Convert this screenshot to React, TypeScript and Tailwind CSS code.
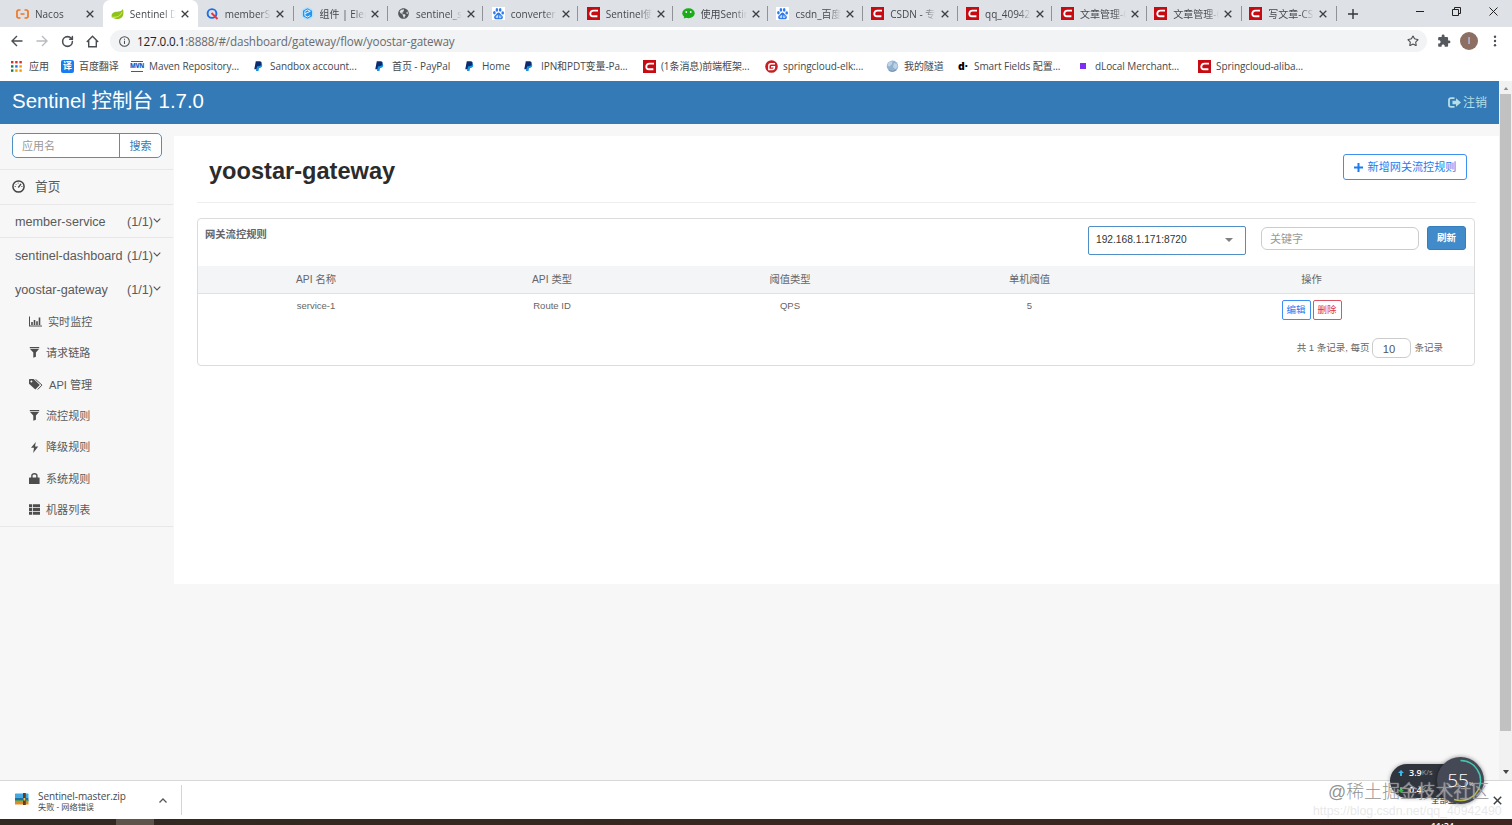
import type { ReactNode } from "react";
import { RotateCw, Star } from "lucide-react";
import { FaGlobeAmericas } from "react-icons/fa";
import { MdExtension } from "react-icons/md";

const ui = "font-['Open_Sans','Noto_Sans_CJK_SC',sans-serif]";
const web = "font-['Liberation_Sans','Noto_Sans_CJK_SC',sans-serif]";

function Csdn() {
  return (
    <svg viewBox="0 0 13 13" className="h-[13px] w-[13px]">
      <rect width="13" height="13" fill="#c70b12" />
      <path d="M11 3.600H6.400Q3.500 3.600 3.300 6.500Q3.200 9.300 5.800 9.300H10.400" fill="none" stroke="#fff" strokeWidth="1.900" />
    </svg>
  );
}

function Paypal() {
  return (
    <svg viewBox="0 0 10 11" className="h-[10px] w-[9px]">
      <path d="M3.200 2.800h4.300c1.500.3 2 1.400 1.500 2.800C8.500 7.300 7.200 7.800 5.600 7.800L5 11H2.200z" fill="#1b93dc" />
      <path d="M2 .3h4.200c1.900.1 2.600 1.200 2.200 2.800C8 5.100 6.600 5.800 4.600 5.800H3.500L2.800 9H.3z" fill="#0c2c71" />
    </svg>
  );
}

function Baidu() {
  return (
    <svg viewBox="0 0 13 13" className="h-[13px] w-[13px]">
      <rect width="13" height="13" fill="#fff" />
      <g fill="#2f7bea">
        <ellipse cx="2.400" cy="5.700" rx="1.300" ry="1.700" />
        <ellipse cx="4.900" cy="2.900" rx="1.300" ry="1.800" />
        <ellipse cx="8.200" cy="2.900" rx="1.300" ry="1.800" />
        <ellipse cx="10.700" cy="5.900" rx="1.300" ry="1.700" />
        <path d="M6.500 5.600c1.300 0 1.700 1.200 2.700 2.200 1.300 1.200 2 1.900 1.600 3.300-.4 1.500-2.200 1.200-4.300 1.100-2.100.1-3.900.4-4.300-1.100-.4-1.400.3-2.100 1.600-3.300 1-1 1.400-2.200 2.700-2.200z" />
      </g>
      <path d="M5.600 8v2.600H4.300V9.200h1.300M7.400 8.500v2.100h1.500V8.500" fill="none" stroke="#fff" strokeWidth=".7" />
    </svg>
  );
}

function Cross({ className = "h-2 w-2" }: { className?: string }) {
  return (
    <svg viewBox="0 0 8 8" className={className} fill="none" stroke="#3c4043" strokeWidth="1.300">
      <path d="M.7.7l6.600 6.600M7.300.7L.7 7.300" />
    </svg>
  );
}

const favicons: Record<string, ReactNode> = {
  nacos: (
    <svg viewBox="0 0 13 10" className="h-[10px] w-[13px]" fill="none" stroke="#f07623" strokeWidth="1.700">
      <path d="M4.500 1H2.200L1 2.200v5.600L2.200 9h2.300M8.500 1h2.300L12 2.200v5.600L10.800 9H8.500M4.500 5h4" />
    </svg>
  ),
  leaf: (
    <svg viewBox="0 0 14 12" className="h-3 w-[14px]">
      <path d="M.8 9.500C-.3 4.200 4 3.600 8 3.200 10.500 3 12 2 12.800.5c1.500 5 .3 10.500-5 10.800-2 .2-4.500 0-7-1.800z" fill="#8dc21f" />
      <path d="M1 9.500c4 .5 9-1 11-5.500" fill="none" stroke="#d5e94a" strokeWidth="1.200" />
    </svg>
  ),
  quick: (
    <svg viewBox="0 0 13 12" className="h-3 w-[13px]" fill="none">
      <circle cx="6" cy="5.500" r="4.400" stroke="#1b6fe8" strokeWidth="1.900" />
      <path d="M5.500 5l6 6" stroke="#e9383f" strokeWidth="2" />
    </svg>
  ),
  element: (
    <svg viewBox="0 0 13 13" className="h-[13px] w-[13px]">
      <circle cx="6.500" cy="6.500" r="6.300" fill="#b5e1fb" />
      <path d="M6.500 1.200l4.500 2.600v5.400l-4.500 2.600L2 9.200V3.800z" fill="#2494ef" />
      <path d="M9.300 4.300L6.500 2.900 3.900 4.400v4.200l2.600 1.400 2.800-1.500M4 6.700l5.300-2.400" stroke="#e8f6ff" fill="none" />
    </svg>
  ),
  globe: <FaGlobeAmericas className="h-[11px] w-[11px] text-[#55585c]" />,
  baidu: <Baidu />,
  csdn: <Csdn />,
  wechat: (
    <svg viewBox="0 0 13 11" className="h-[11px] w-[13px]">
      <ellipse cx="6.500" cy="5.300" rx="6.200" ry="5" fill="#1aad19" />
      <path d="M2.500 8l-.8 2.600L5 9.500z" fill="#1aad19" />
      <circle cx="4.300" cy="4" r=".9" fill="#fff" />
      <circle cx="8.700" cy="4" r=".9" fill="#fff" />
    </svg>
  ),
};

const tabs = [
  { icon: "nacos", title: "Nacos" },
  { icon: "leaf", title: "Sentinel Dashboard", active: true },
  { icon: "quick", title: "memberService" },
  { icon: "element", title: "组件 | Element", line: true },
  { icon: "globe", title: "sentinel_server", line: true },
  { icon: "baidu", title: "converter_百", line: true },
  { icon: "csdn", title: "Sentinel使用", line: true },
  { icon: "wechat", title: "使用Sentinel", line: true },
  { icon: "baidu", title: "csdn_百度搜", line: true },
  { icon: "csdn", title: "CSDN - 专业", line: true },
  { icon: "csdn", title: "qq_40942490", line: true },
  { icon: "csdn", title: "文章管理-CS", line: true },
  { icon: "csdn", title: "文章管理-CS", line: true },
  { icon: "csdn", title: "写文章-CSDN", line: true },
];

function TabStrip() {
  return (
    <div className="flex h-[27px] bg-[#dee1e6] pl-2">
      {tabs.map((tab, i) => (
        <div
          key={i}
          className={`relative flex h-[27px] w-[94.860px] shrink-0 items-center ${tab.active ? "rounded-t-[7px] bg-white" : ""} ${i > 3 && i < 12 ? "pl-[9.500px]" : "pl-2"}`}
        >
          {tab.line && <span className="absolute top-[6px] left-0 h-[15px] w-px bg-[#8f9297]" />}
          <span className="flex w-[13px] justify-center">{favicons[tab.icon]}</span>
          <span className="ml-1.5 w-[46px] overflow-hidden text-[10px] leading-4 whitespace-nowrap text-[#45494d] [mask-image:linear-gradient(to_right,black_72%,transparent)]">
            {tab.title}
          </span>
          <span className="ml-[5px]">
            <Cross />
          </span>
        </div>
      ))}
      <div className="relative flex w-[50px] items-center pl-3">
        <span className="absolute top-[6px] left-0 h-[15px] w-px bg-[#8f9297]" />
        <svg viewBox="0 0 10 10" className="h-[10px] w-[10px]" stroke="#33363a" strokeWidth="1.400">
          <path d="M5 0v10M0 5h10" />
        </svg>
      </div>
      <div className="ml-auto flex h-[23px] items-center gap-[28px] pr-[14px]">
        <svg viewBox="0 0 8 8" className="h-2 w-2" stroke="#222">
          <path d="M0 3.500h8" />
        </svg>
        <svg viewBox="0 0 9 9" className="h-[9px] w-[9px]" fill="none" stroke="#222">
          <path d="M.5 2.500h6v6h-6zM2.500 2.500v-2h6v6h-2" />
        </svg>
        <svg viewBox="0 0 9 9" className="h-[9px] w-[9px]" stroke="#222">
          <path d="M.5.5l8 8M8.500.5l-8 8" />
        </svg>
      </div>
    </div>
  );
}

function Toolbar() {
  return (
    <div className="flex h-7 items-center bg-white pr-[14px] pl-[11px]">
      <svg viewBox="0 0 12 12" className="h-3 w-3" fill="none" stroke="#4a4d51" strokeWidth="1.400">
        <path d="M11.500 6H1.200M6 1L1 6l5 5" />
      </svg>
      <svg viewBox="0 0 12 12" className="ml-[13px] h-3 w-3" fill="none" stroke="#b9bbbe" strokeWidth="1.400">
        <path d="M.5 6h10.300M6 1l5 5-5 5" />
      </svg>
      <RotateCw className="ml-[13px] h-[13px] w-[13px] text-[#4a4d51]" strokeWidth={2.800} />
      <svg viewBox="0 0 13 13" className="ml-3 h-[13px] w-[13px]" fill="none" stroke="#4a4d51" strokeWidth="1.400">
        <path d="M.8 7L6.500 1.300 12.200 7M2.700 5.500v6.300h7.600V5.500" />
      </svg>
      <div className="ml-[11px] flex h-[22px] w-[1317px] items-center rounded-full bg-[#f1f3f4] pr-2 pl-[9px]">
        <svg viewBox="0 0 12 12" className="h-[11px] w-[11px]" fill="none" stroke="#4a4d51" strokeWidth="1.100">
          <circle cx="6" cy="6" r="5.300" />
          <path d="M6 5.200v3.500M6 3v1.200" />
        </svg>
        <span className="mb-px ml-[7px] text-[11.700px] leading-5 tracking-[-0.130px] whitespace-nowrap text-[#686c71]">
          <span className="text-[#202124]">127.0.0.1</span>:8888/#/dashboard/gateway/flow/yoostar-gateway
        </span>
        <Star className="ml-auto h-3 w-3 text-[#4a4d51]" strokeWidth={2.200} />
      </div>
      <MdExtension className="ml-[10px] h-[14px] w-[14px] text-[#55585c]" />
      <span className="ml-[9px] flex h-[18px] w-[18px] items-center justify-center rounded-full bg-[#8d6e63] text-[9px] text-[#f3ebe8]">
        I
      </span>
      <svg viewBox="0 0 4 12" className="ml-[15px] h-3 w-1" fill="#4a4d51">
        <circle cx="2" cy="1.800" r="1.200" />
        <circle cx="2" cy="6" r="1.200" />
        <circle cx="2" cy="10.200" r="1.200" />
      </svg>
    </div>
  );
}

const apps = ["#d93025", "#d93025", "#d93025", "#188038", "#1a73e8", "#f29900", "#188038", "#f29900", "#f29900"];

type Bookmark = { icon: ReactNode; text: string; width: string; gap?: string };

const bookmarks: Bookmark[] = [
  {
    icon: (
      <svg viewBox="0 0 11 11" className="h-[11px] w-[11px]">
        {apps.map((color, i) => (
          <rect key={i} x={(i % 3) * 4.200} y={Math.floor(i / 3) * 4.200} width="2.400" height="2.400" fill={color} />
        ))}
      </svg>
    ),
    text: "应用",
    width: "w-[50px]",
    gap: "w-[18px]",
  },
  {
    icon: (
      <span className="flex h-[13px] w-[13px] items-center justify-center rounded-[2px] bg-[#1a7cf0] text-[9px] leading-3 font-bold text-white">
        译
      </span>
    ),
    text: "百度翻译",
    width: "w-[70px]",
    gap: "w-[18px]",
  },
  {
    icon: (
      <span className="flex h-[11px] w-3 items-center justify-center border-y border-[#1565c8] text-[6px] leading-none font-extrabold tracking-[-0.400px] text-[#1565c8]">
        MVN
      </span>
    ),
    text: "Maven Repository...",
    width: "w-[123px]",
    gap: "w-[18px]",
  },
  { icon: <Paypal />, text: "Sandbox account...", width: "w-[121px]", gap: "w-4" },
  { icon: <Paypal />, text: "首页 - PayPal", width: "w-[90px]", gap: "w-[17px]" },
  { icon: <Paypal />, text: "Home", width: "w-[59px]", gap: "w-[17px]" },
  { icon: <Paypal />, text: "IPN和PDT变量-Pa...", width: "w-[119px]", gap: "w-[17px]" },
  { icon: <Csdn />, text: "(1条消息)前端框架...", width: "w-[122px]", gap: "w-[18px]" },
  {
    icon: (
      <svg viewBox="0 0 13 13" className="h-[13px] w-[13px]">
        <circle cx="6.500" cy="6.500" r="6.300" fill="#c71d23" />
        <path d="M10 3.800H6Q3.800 3.800 3.800 6v3.500h3.700Q9.500 9.300 9.500 6.700H6" fill="none" stroke="#fff" strokeWidth="1.400" />
      </svg>
    ),
    text: "springcloud-elk:...",
    width: "w-[121px]",
    gap: "w-[18px]",
  },
  {
    icon: (
      <svg viewBox="0 0 13 13" className="h-[13px] w-[13px]">
        <circle cx="6.500" cy="6.300" r="5.700" fill="#8fb1d2" />
        <path d="M2 3.500Q4 .8 6.500 1.500L6 4 3.500 6.500 1.500 6zM8 3l3 .7.800 3-2.500 2.500L7 7z" fill="#bdd3e2" />
        <path d="M3 10.500q3.500 2 7-.5" stroke="#7d91a8" fill="none" />
      </svg>
    ),
    text: "我的隧道",
    width: "w-[72px]",
    gap: "w-[18px]",
  },
  {
    icon: <span className="text-[10.500px] leading-3 font-extrabold text-black">d·</span>,
    text: "Smart Fields 配置...",
    width: "w-[121px]",
    gap: "w-[16px]",
  },
  { icon: <span className="ml-px h-1.5 w-1.5 bg-[#7b2ff2]" />, text: "dLocal Merchant...", width: "w-[119px]", gap: "w-4" },
  { icon: <Csdn />, text: "Springcloud-aliba...", width: "w-[120px]", gap: "w-[18px]" },
];

function BookmarkBar() {
  return (
    <div className="flex h-[26px] items-center bg-white pb-[4px] pl-[11px]">
      {bookmarks.map((b, i) => (
        <div key={i} className={`flex shrink-0 items-center ${b.width}`}>
          <span className={`flex shrink-0 items-center ${b.gap}`}>{b.icon}</span>
          <span className="text-[10px] leading-4 tracking-[-0.080px] whitespace-nowrap text-[#45494d]">{b.text}</span>
        </div>
      ))}
    </div>
  );
}

function Chevron() {
  return (
    <svg viewBox="0 0 8 5" className="h-[5px] w-[8px]" fill="none" stroke="#555" strokeWidth="1.100">
      <path d="M.7.6L4 3.900 7.300.6" />
    </svg>
  );
}

const funnel = (
  <svg viewBox="0 0 11 11" className="mb-[2px] h-[11px] w-[11px]" fill="#4d4d4d">
    <path d="M.8 0h9.400v1.200H.8zM1 1.900h9L6.900 5.500v4.300L4.300 10.800V5.500z" />
  </svg>
);

const menu = [
  {
    label: "实时监控",
    icon: (
      <svg viewBox="0 0 13 11" className="h-[11px] w-[13px]" fill="#4d4d4d">
        <path d="M0 .5h1V9.500h12v1H0zM2.200 6h1.600v3H2.200zM4.700 4h1.600v5H4.700zM7.200 5.200h1.600V9H7.200zM9.700 1.500h1.600V9H9.700z" />
      </svg>
    ),
  },
  { label: "请求链路", icon: funnel },
  {
    label: "API 管理",
    icon: (
      <svg viewBox="0 0 14 11" className="h-[11px] w-[14px]">
        <path d="M0 .8Q0 0 .8 0h3.900l6.100 6.100-4.500 4.500L0 4.800z" fill="#4d4d4d" />
        <circle cx="2.400" cy="2.400" r="1" fill="#f7f7f7" />
        <path d="M6.500.3l6.500 5.800-4.300 4.400" fill="none" stroke="#4d4d4d" />
      </svg>
    ),
  },
  { label: "流控规则", icon: funnel },
  {
    label: "降级规则",
    icon: (
      <svg viewBox="0 0 11 11" className="h-[11px] w-[11px]" fill="#4d4d4d">
        <path d="M6.800 0L2 5.800h3L4.200 11 9.200 4.600H6z" />
      </svg>
    ),
  },
  {
    label: "系统规则",
    icon: (
      <svg viewBox="0 0 11 11" className="mb-px h-[11px] w-[11px]">
        <path d="M2.900 5V2.600Q2.900.8 5.400.8T7.900 2.600V5" fill="none" stroke="#4d4d4d" strokeWidth="1.400" />
        <rect x="0" y="4.400" width="10.600" height="6.600" rx=".5" fill="#4d4d4d" />
      </svg>
    ),
  },
  {
    label: "机器列表",
    icon: (
      <svg viewBox="0 0 11 11" className="mb-px h-[11px] w-[11px]" fill="#4d4d4d">
        <path d="M0 .2h3v3H0zM3.800 .2h7.200v3H3.800zM0 4h3v3H0zM3.800 4h7.200v3H3.800zM0 7.800h3v3H0zM3.800 7.800h7.200v3H3.800z" />
      </svg>
    ),
  },
];

function Sidebar() {
  return (
    <aside className="w-[173px] shrink-0 text-[#5a5a5a]">
      <div className="h-[46px] border-b border-[#e7e7e7] pt-[9px] pl-3">
        <div className="flex h-[25px] w-[150px] overflow-hidden rounded-[5px] border border-[#4f8fc6] bg-white text-[11px] leading-[24px]">
          <span className="w-[107px] border-r border-[#4f8fc6] pl-[9px] text-[#999]">应用名</span>
          <span className="flex-1 text-center text-[#337ab7]">搜索</span>
        </div>
      </div>
      <div className="flex h-[35px] items-center border-b border-[#e7e7e7] pl-3 text-[12.700px]">
        <svg viewBox="0 0 13 13" className="mb-[2px] h-[13px] w-[13px]" fill="none" stroke="#444">
          <circle cx="6.500" cy="6.500" r="5.600" strokeWidth="1.500" />
          <path d="M6.300 7.500L9 3.800" strokeWidth="1.300" />
          <path d="M2.700 6.500h1M9.400 6.500h1M3.800 4.200l.6.600M6.200 2.700v.8" />
        </svg>
        <span className="ml-[10px] pt-px">首页</span>
      </div>
      {["member-service", "sentinel-dashboard", "yoostar-gateway"].map((name, i) => (
        <div
          key={name}
          className={`flex items-center pt-px pr-3 pl-[15px] text-[12.650px] leading-4 ${i === 0 ? "h-[33px] border-b border-[#e7e7e7]" : "h-[34px]"}`}
        >
          <span className="w-[112px] whitespace-nowrap">{name}</span>
          <span>(1/1)</span>
          <span className="mb-[3px]">
            <Chevron />
          </span>
        </div>
      ))}
      <div className="border-b border-[#e7e7e7]">
        {menu.map((item) => (
          <div key={item.label} className="flex h-[31.450px] items-center pl-[29px] text-[11.100px] whitespace-nowrap">
            {item.icon}
            <span className="ml-[6px] pt-[0.500px]">{item.label}</span>
          </div>
        ))}
      </div>
    </aside>
  );
}

function RulesPanel() {
  const cols = "grid grid-cols-[236px_236px_240px_239px_1fr] text-center";
  return (
    <section className="mx-[23px] mt-[15px] mr-[24px] h-[148px] rounded-[4px] border border-[#dcdcdc] text-[#666]">
      <div className="flex h-[47px] pr-2 pl-[7px]">
        <span className="mt-[8px] text-[10.300px] leading-4 font-bold text-[#666]">网关流控规则</span>
        <div className="mt-[6.500px] ml-auto flex h-[29px] w-[158px] items-center justify-between rounded-[2px] border border-[#4f8fc6] pr-3 pl-[7px] text-[10.200px] text-[#333]">
          192.168.1.171:8720
          <svg viewBox="0 0 8 4" className="h-1 w-2" fill="#808080">
            <path d="M0 0h8L4 4z" />
          </svg>
        </div>
        <div className="mt-[8px] ml-[15px] flex h-[23px] w-[158px] items-center rounded-[6px] border border-[#ccc] pt-px pl-2 text-[11px] text-[#999]">
          关键字
        </div>
        <div className="mt-[7px] ml-2 flex h-6 w-[39px] items-center justify-center rounded-[3px] border border-[#357ebd] bg-[#428bca] text-[9.500px] font-bold text-white">
          刷新
        </div>
      </div>
      <div className={`${cols} h-[28px] border-b border-[#dfe2e5] bg-[#f3f5f6] text-[10.300px] leading-[27px]`}>
        <span>API 名称</span>
        <span>API 类型</span>
        <span>阈值类型</span>
        <span>单机阈值</span>
        <span>操作</span>
      </div>
      <div className={`${cols} h-[45px] text-[9.500px] leading-[24px]`}>
        <span>service-1</span>
        <span>Route ID</span>
        <span>QPS</span>
        <span>5</span>
        <span className="flex justify-center gap-0.5 pt-[6px] leading-[18px]">
          <span className="h-5 w-[29px] rounded-[2px] border border-[#3d8ff0] text-[#1a7cf0]">编辑</span>
          <span className="h-5 w-[29px] rounded-[2px] border border-[#dc5565] text-[#dc3545]">删除</span>
        </span>
      </div>
      <div className="-mt-px flex h-[20px] items-center justify-end pr-[31px] text-[9.500px]">
        共 1 条记录, 每页
        <span className="mx-[3px] h-[20px] w-[39px] rounded-[6px] border border-[#ccc] pr-[6px] text-center text-[11.200px] leading-5 text-[#555]">
          10
        </span>
        条记录
      </div>
    </section>
  );
}

function Content() {
  return (
    <main className="mt-3 ml-px h-[448px] flex-1 bg-white">
      <div className="mx-[23px] flex h-[67px] justify-between border-b border-[#eee] pr-[9px] pl-3">
        <h1 className="mt-[20px] text-[23.600px] leading-[30px] font-bold text-[#2b2b2b]">yoostar-gateway</h1>
        <div className="mt-[18px] flex h-[26px] w-[124px] items-center justify-center rounded-[3px] border border-[#3d8ff0] text-[11.100px] whitespace-nowrap text-[#1a7cf0]">
          <svg viewBox="0 0 9 9" className="mr-[5px] h-[9px] w-[9px]" stroke="#1a7cf0" strokeWidth="2">
            <path d="M4.500 0v9M0 4.500h9" />
          </svg>
          <span className="pt-px">新增网关流控规则</span>
        </div>
      </div>
      <RulesPanel />
    </main>
  );
}

function Scrollbar() {
  return (
    <div className="flex w-[13px] shrink-0 flex-col items-center bg-[#f1f1f1]">
      <svg viewBox="0 0 6 4" className="mt-[6px] h-[3px] w-[6px]" fill="#8b8b8b">
        <path d="M0 4l3-4 3 4z" />
      </svg>
      <div className="mt-1 h-[637px] w-[11px] bg-[#c1c1c1]" />
      <svg viewBox="0 0 6 4" className="mt-auto mb-[6px] h-1 w-[6px]" fill="#444">
        <path d="M0 0l3 4 3-4z" />
      </svg>
    </div>
  );
}

function DownloadBar() {
  return (
    <div className="flex h-[39px] items-center border-t border-[#d8d8d8] bg-white">
      <div className="flex h-[30px] w-[182px] items-center border-r border-[#d5d5d5] pl-[15px]">
        <svg viewBox="0 0 14 12" className="mb-[2px] h-3 w-[14px]">
          <rect width="13.500" height="4" y=".5" rx=".5" fill="#45a9e0" />
          <rect width="13.500" height="3.500" y="4.500" fill="#1e6fa9" />
          <rect width="13.500" height="3.500" y="8" fill="#dd8a27" />
          <path d="M0 7.300h13.500v1H0z" fill="#6aae35" />
          <path d="M8 0h2.800v12H8z" fill="#683a24" />
          <path d="M8.500 5h1.800v2.500H8.500z" fill="#f0c454" />
        </svg>
        <div className="ml-[9px] w-[121px] pt-px text-[#45494d]">
          <div className="text-[10px] leading-[12px] tracking-[-0.100px]">Sentinel-master.zip</div>
          <div className="text-[8.200px] leading-[10px]">失败 - 网络错误</div>
        </div>
        <svg viewBox="0 0 8 5" className="h-[5px] w-2" fill="none" stroke="#55585c" strokeWidth="1.300">
          <path d="M.5 4.500L4 1l3.500 3.500" />
        </svg>
      </div>
      <span className="mr-[28px] ml-auto text-[8.500px] text-[#333]">全部显示</span>
      <span className="mr-[10px]">
        <Cross className="h-[9px] w-[9px]" />
      </span>
    </div>
  );
}

function SpeedWidget() {
  return (
    <div className="absolute top-[757px] left-[1390px] h-[47px] w-[94px] text-white">
      <div className="absolute top-[7px] left-0 flex h-[34px] w-[70px] flex-col justify-center rounded-l-full bg-[#30343d] pl-2 text-[9px] leading-[17px] font-semibold shadow-[0_0_4px_rgba(0,0,0,0.350)]">
        <div className="flex items-center">
          <svg viewBox="0 0 6 6" className="mr-[5px] h-[6px] w-[6px]" fill="#39b7e8">
            <path d="M3 0l3 3H4v3H2V3H0z" />
          </svg>
          3.9<span className="text-[7.500px] font-normal text-[#9da1a8]">K/s</span>
        </div>
        <div className="flex items-center">
          <svg viewBox="0 0 6 6" className="mr-[5px] h-[6px] w-[6px]" fill="#35b34a">
            <path d="M3 6l3-3H4V0H2v3H0z" />
          </svg>
          0.4<span className="text-[7.500px] font-normal text-[#9da1a8]">K/s</span>
        </div>
      </div>
      <div className="absolute top-0 left-[47px] flex h-[47px] w-[47px] items-center justify-center rounded-full bg-[#454955] shadow-[0_0_4px_rgba(0,0,0,0.450)]">
        <svg viewBox="0 0 47 47" className="absolute h-[47px] w-[47px]" fill="none" strokeWidth="1.500">
          <path d="M23.500 3.500A20 20 0 0 1 42 31" stroke="#45c6ae" />
          <path d="M42 31A20 20 0 0 1 17 42.500" stroke="#b7ba48" />
        </svg>
        <span className="font-['Open_Sans',sans-serif] text-[19px] leading-none font-light">55</span>
        <span className="mt-2 text-[6px]">%</span>
      </div>
    </div>
  );
}

export default function App() {
  return (
    <div className={`relative flex h-[825px] w-[1512px] flex-col overflow-hidden bg-[#f7f7f7] ${ui}`}>
      <TabStrip />
      <Toolbar />
      <BookmarkBar />
      <div className={`flex h-[699px] ${web}`}>
        <div className="flex min-w-0 flex-1 flex-col">
          <header className="flex h-[43px] shrink-0 items-center justify-between bg-[#337ab7] pr-3 pl-3 text-white">
            <span className="-mt-1 text-[20.450px] leading-6">Sentinel 控制台 1.7.0</span>
            <span className="flex items-center text-[12px] text-[#b5dfe4]">
              <svg viewBox="0 0 13 11" className="mr-[2px] h-[11px] w-[13px]">
                <path d="M6.500 1.200H3Q1 1.200 1 3v5q0 1.800 2 1.800h3.500" fill="none" stroke="#b5dfe4" strokeWidth="1.800" />
                <path d="M4.500 3.800h3.500V1.200l5 4.300-5 4.300V7.200H4.500z" fill="#b5dfe4" />
              </svg>
              <span className="pt-px">注销</span>
            </span>
          </header>
          <div className="flex">
            <Sidebar />
            <Content />
          </div>
        </div>
        <Scrollbar />
      </div>
      <DownloadBar />
      <div className="flex h-[6px] overflow-hidden bg-linear-to-r from-[#302a22] to-[#3e251f]">
        <span className="ml-[116px] h-full w-[38px] bg-[#5d544b]" />
        <span className="mt-[2px] mr-[58px] ml-auto text-[9px] leading-[10px] font-semibold text-white">11:24</span>
      </div>
      <SpeedWidget />
      <span className={`absolute top-[782px] left-[1328px] text-[17.900px] leading-5 font-light whitespace-nowrap text-[#858585]/90 [text-shadow:0_0_1px_#fff] ${web}`}>
        @稀土掘金技术社区
      </span>
      <span className={`absolute top-[803px] left-[1313px] text-[12.300px] leading-4 whitespace-nowrap text-[#dedede]/70 ${web}`}>
        https://blog.csdn.net/qq_40942490
      </span>
    </div>
  );
}
